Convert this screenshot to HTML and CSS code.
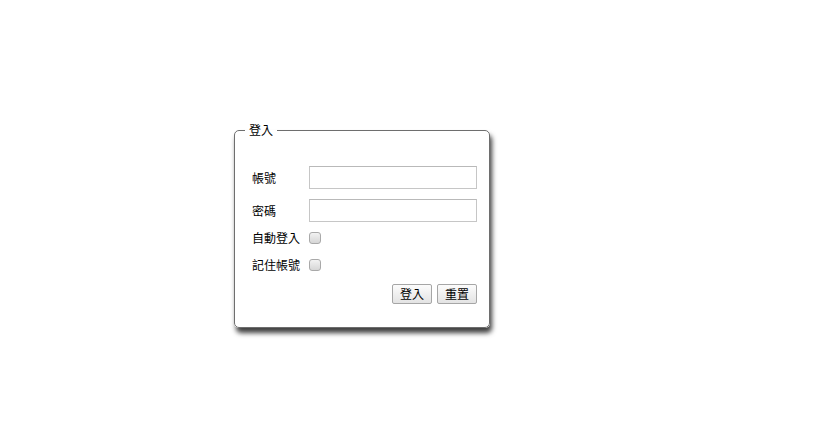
FILE: index.html
```html
<!DOCTYPE html>
<html lang="zh-Hant">
<head>
<meta charset="utf-8">
<title>登入</title>
<link rel="stylesheet" href="styles.css">
</head>
<body>
<div class="page">
  <form class="login" onsubmit="return false;">
    <fieldset class="box">
      <legend class="box-title">登入</legend>
      <div class="rows">
        <div class="row row-field">
          <label class="lbl" for="acc">帳號</label>
          <input class="txt" id="acc" type="text">
        </div>
        <div class="row row-field row-2">
          <label class="lbl" for="pwd">密碼</label>
          <input class="txt" id="pwd" type="password">
        </div>
        <div class="row row-check row-3">
          <label class="lbl" for="auto">自動登入</label>
          <input class="chk" id="auto" type="checkbox">
        </div>
        <div class="row row-check row-4">
          <label class="lbl" for="keep">記住帳號</label>
          <input class="chk" id="keep" type="checkbox">
        </div>
        <div class="row row-btns">
          <button class="btn" type="submit">登入</button>
          <button class="btn" type="reset">重置</button>
        </div>
      </div>
    </fieldset>
  </form>
</div>
</body>
</html>
```

FILE: styles.css
```css
html, body {
  margin: 0;
  padding: 0;
  background: #ffffff;
}

body {
  font-family: "Noto Sans CJK TC", "Noto Sans CJK SC", "Liberation Sans", sans-serif;
  font-size: 12px;
  color: #000000;
}

.page {
  box-sizing: border-box;
  min-height: 100vh;
  padding: 123px 0 40px 234px;
}

.login {
  display: flow-root;
  margin: 0;
  width: 256px;
}

.box {
  box-sizing: border-box;
  width: 256px;
  margin: 0;
  padding: 29px 12px 23px 10px;
  border: 1px solid #6e6e6e;
  border-radius: 5px;
  background: #ffffff;
  box-shadow: 2px 5px 5px rgba(0, 0, 0, 0.75);
}

.box-title {
  padding: 0 4px;
  font-size: 12px;
  line-height: 14px;
}

.rows {
  display: flex;
  flex-direction: column;
  margin-left: 7px;
}

.row {
  display: flex;
  align-items: center;
}

.row-field {
  height: 23px;
}

.row-2 {
  margin-top: 10px;
}

.row-check {
  height: 20px;
}

.row-3 {
  margin-top: 6px;
}

.row-4 {
  margin-top: 7px;
}

.row-btns {
  height: 20px;
  margin-top: 9px;
  justify-content: flex-end;
  gap: 5px;
}

.lbl {
  width: 57px;
  flex: none;
  line-height: 14px;
  white-space: nowrap;
}

.txt {
  box-sizing: border-box;
  width: 168px;
  height: 23px;
  margin: 0;
  padding: 2px 4px;
  border: 1px solid #c6c6c6;
  border-top-color: #b9b9b9;
  background: #ffffff;
  font: inherit;
  outline: none;
}

.chk {
  appearance: none;
  -webkit-appearance: none;
  box-sizing: border-box;
  width: 12px;
  height: 12px;
  margin: 0;
  border: 1px solid #a9a9a9;
  border-radius: 3px;
  background: linear-gradient(#f2f2f2, #d6d6d6);
}

.btn {
  box-sizing: border-box;
  width: 40px;
  height: 20px;
  margin: 0;
  padding: 0;
  border: 1px solid #a6a6a6;
  border-radius: 2px;
  background: linear-gradient(#fcfcfc, #e3e3e3);
  font: inherit;
  line-height: 16px;
  color: #000000;
}
```
